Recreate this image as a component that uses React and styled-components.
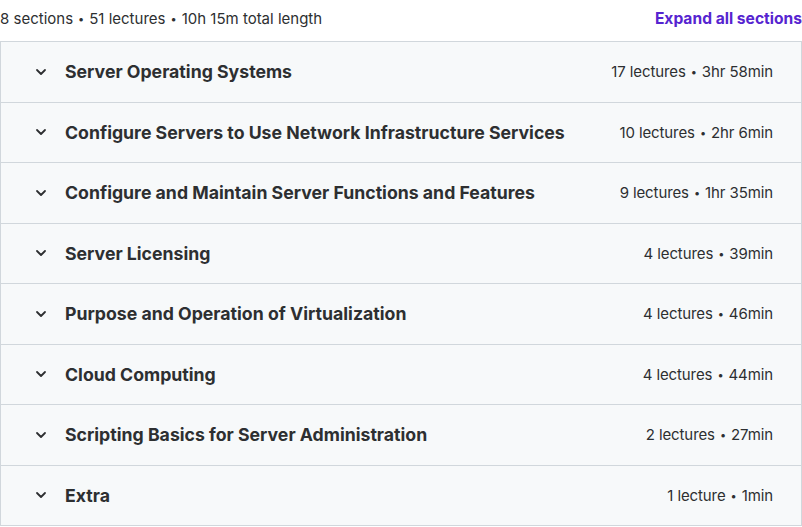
import React from "react";
import styled, { createGlobalStyle } from "styled-components";

const Global = createGlobalStyle`
  html, body { margin: 0; padding: 0; background: #ffffff; }
  body { font-family: Inter, "Noto Sans", sans-serif; color: #2d2f31; }
`;

const Wrap = styled.div`
  width: 802px;
  display: flex;
  flex-direction: column;
`;

const Header = styled.div`
  display: flex;
  justify-content: space-between;
  align-items: center;
  height: 37px;
  margin-bottom: 4px;
`;

const Summary = styled.span`
  font-size: 15px;
  color: #2d2f31;
`;

const ExpandLink = styled.button`
  background: none;
  border: none;
  padding: 0;
  font-family: inherit;
  font-size: 15.6px;
  font-weight: 700;
  color: #5624d0;
  cursor: pointer;
`;

const List = styled.div`
  border: 1px solid #d1d7dc;
  border-bottom: none;
  width: 800px;
  display: flex;
  flex-direction: column;
`;

const Row = styled.div`
  display: flex;
  align-items: center;
  height: 59.5px;
  background: #f7f9fa;
  border-bottom: 1px solid #d1d7dc;
  padding: 0 28px 0 32px;
`;

const Chevron = styled.svg`
  width: 16px;
  height: 16px;
  flex: none;
  margin-right: 16px;
`;

const Title = styled.span`
  flex: 1;
  font-size: 17.7px;
  font-weight: 700;
  color: #2d2f31;
`;

const Meta = styled.span`
  font-size: 15px;
  color: #2d2f31;
  white-space: nowrap;
  letter-spacing: -0.1px;
`;

const Dot = styled.span`
  display: inline-block;
  font-size: 11px;
  margin: 0 5px;
  vertical-align: 1px;
`;

const sections = [
  ["Server Operating Systems", "17 lectures", "3hr 58min"],
  ["Configure Servers to Use Network Infrastructure Services", "10 lectures", "2hr 6min"],
  ["Configure and Maintain Server Functions and Features", "9 lectures", "1hr 35min"],
  ["Server Licensing", "4 lectures", "39min"],
  ["Purpose and Operation of Virtualization", "4 lectures", "46min"],
  ["Cloud Computing", "4 lectures", "44min"],
  ["Scripting Basics for Server Administration", "2 lectures", "27min"],
  ["Extra", "1 lecture", "1min"],
];

const ChevronIcon = () => (
  <Chevron viewBox="0 0 16 16" fill="none">
    <path d="M4 6l4 4 4-4" stroke="#2d2f31" strokeWidth="1.8" strokeLinecap="round" strokeLinejoin="round" />
  </Chevron>
);

export default function App() {
  return (
    <>
      <Global />
      <Wrap>
        <Header>
          <Summary>
            8 sections<Dot>•</Dot>51 lectures<Dot>•</Dot>10h 15m total length
          </Summary>
          <ExpandLink>Expand all sections</ExpandLink>
        </Header>
        <List>
          {sections.map(([t, l, d]) => (
            <Row key={t}>
              <ChevronIcon />
              <Title>{t}</Title>
              <Meta>
                {l}<Dot>•</Dot>{d}
              </Meta>
            </Row>
          ))}
        </List>
      </Wrap>
    </>
  );
}
